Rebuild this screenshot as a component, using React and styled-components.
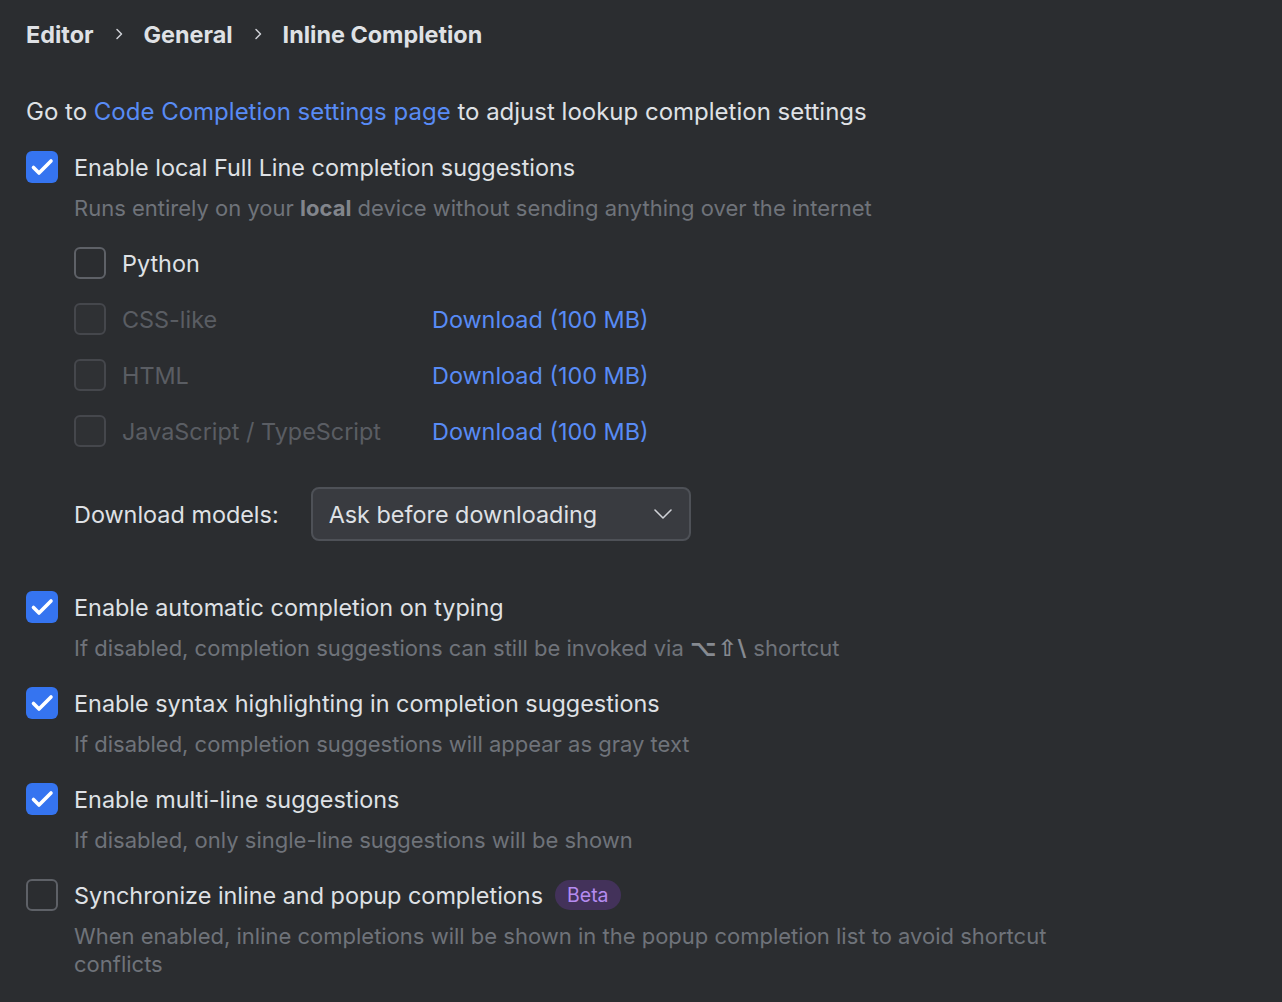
import React from 'react'
import styled, { createGlobalStyle } from 'styled-components'

const GlobalStyle = createGlobalStyle`
    html, body {
        margin: 0;
        padding: 0;
        background: #2b2d30;
    }
    body {
        font-family: Inter, "Noto Sans", "DejaVu Sans", sans-serif;
        color: #dfe1e5;
        -webkit-font-smoothing: antialiased;
    }
`

const Page = styled.div`
    min-height: 1002px;
    padding: 20px 26px 0 26px;
    box-sizing: border-box;
    display: flex;
    flex-direction: column;
`

const Crumbs = styled.nav`
    display: flex;
    align-items: center;
    gap: 19px;
    height: 28px;
    font-size: 23.4px;
    font-weight: 700;
    color: #dfe1e5;
`

const Intro = styled.p`
    margin: 50px 0 0 0;
    font-size: 24px;
    line-height: 28px;
`

const Link = styled.a`
    color: #588bf5;
    text-decoration: none;
    cursor: pointer;
`

const Options = styled.div`
    margin-top: 25px;
    display: flex;
    flex-direction: column;
    gap: 25px;
`

const Option = styled.div`
    display: flex;
    flex-direction: column;
    gap: 11px;
`

const CheckRow = styled.label`
    display: flex;
    align-items: center;
    gap: 16px;
    height: 32px;
    font-size: 23.4px;
    color: ${p => (p.$disabled ? '#5a5d63' : '#dfe1e5')};
`

const Box = styled.span`
    width: 32px;
    height: 32px;
    box-sizing: border-box;
    border-radius: 6px;
    flex-shrink: 0;
    display: flex;
    align-items: center;
    justify-content: center;
    background: ${p => (p.$checked ? '#3574f0' : p.$disabled ? '#2f3134' : 'transparent')};
    border: ${p => (p.$checked ? 'none' : p.$disabled ? '2px solid #45474c' : '2px solid #5e6167')};
`

const Title = styled.span`
    display: inline-flex;
    align-items: center;
    gap: 12px;
`

const Desc = styled.div`
    padding-left: 48px;
    max-width: 1010px;
    font-size: 22px;
    line-height: 28px;
    color: #6f737a;
    b {
        font-weight: 700;
        color: #82858c;
    }
`

const Keys = styled.span`
    font-family: "DejaVu Sans", sans-serif;
    font-weight: 700;
    font-size: 23px;
    color: #868a91;
    letter-spacing: 1px;
`

const Languages = styled.div`
    padding-left: 48px;
    margin-top: 14px;
    display: flex;
    flex-direction: column;
    gap: 24px;
`

const LangRow = styled.div`
    display: grid;
    grid-template-columns: 358px auto;
    align-items: center;
    font-size: 23.4px;
`

const ModelsRow = styled.div`
    padding-left: 48px;
    margin-top: 29px;
    margin-bottom: 25px;
    display: flex;
    align-items: center;
    gap: 32px;
    font-size: 23.4px;
`

const Select = styled.div`
    width: 380px;
    height: 54px;
    box-sizing: border-box;
    padding: 0 17px 0 16px;
    border: 2px solid #4e5157;
    border-radius: 8px;
    background: #393b40;
    display: flex;
    align-items: center;
    justify-content: space-between;
    font-size: 23.4px;
    color: #dfe1e5;
`

const Beta = styled.span`
    padding: 0 12px;
    height: 30px;
    border-radius: 15px;
    background: #43325a;
    color: #b58bf0;
    font-size: 19.5px;
    display: inline-flex;
    align-items: center;
`

const Chevron = ({ size = 12, color = '#cfd1d6' }) => (
    <svg width={size} height={size} viewBox="0 0 12 12" fill="none">
        <path d="M4 1.5l4.5 4.5L4 10.5" stroke={color} strokeWidth="1.5" strokeLinecap="round" strokeLinejoin="round" />
    </svg>
)

const Down = () => (
    <svg width="18" height="18" viewBox="0 0 18 18" fill="none">
        <path d="M1 5l8 8 8-8" stroke="#cfd1d6" strokeWidth="1.6" strokeLinecap="round" strokeLinejoin="round" />
    </svg>
)

const Check = () => (
    <svg width="32" height="32" viewBox="0 0 32 32" fill="none">
        <path d="M7.5 16.5l5.5 5.5L25 10" stroke="#fff" strokeWidth="3.6" strokeLinecap="round" strokeLinejoin="round" />
    </svg>
)

const Checkbox = ({ checked, disabled, children }) => (
    <CheckRow $disabled={disabled}>
        <Box $checked={checked} $disabled={disabled}>{checked && <Check />}</Box>
        {children}
    </CheckRow>
)

const langs = ['CSS-like', 'HTML', 'JavaScript / TypeScript']

const App = () => {
    return (
        <Page>
            <GlobalStyle />
            <Crumbs>
                <span>Editor</span>
                <Chevron />
                <span>General</span>
                <Chevron />
                <span>Inline Completion</span>
            </Crumbs>

            <Intro>
                Go to <Link>Code Completion settings page</Link> to adjust lookup completion settings
            </Intro>

            <Options>
                <Option>
                    <Checkbox checked>Enable local Full Line completion suggestions</Checkbox>
                    <Desc>Runs entirely on your <b>local</b> device without sending anything over the internet</Desc>
                    <Languages>
                        <Checkbox>Python</Checkbox>
                        {langs.map(l => (
                            <LangRow key={l}>
                                <Checkbox disabled>{l}</Checkbox>
                                <Link>Download (100 MB)</Link>
                            </LangRow>
                        ))}
                    </Languages>
                    <ModelsRow>
                        <span>Download models:</span>
                        <Select>
                            <span>Ask before downloading</span>
                            <Down />
                        </Select>
                    </ModelsRow>
                </Option>

                <Option>
                    <Checkbox checked>Enable automatic completion on typing</Checkbox>
                    <Desc>If disabled, completion suggestions can still be invoked via <Keys>⌥⇧\</Keys> shortcut</Desc>
                </Option>

                <Option>
                    <Checkbox checked>Enable syntax highlighting in completion suggestions</Checkbox>
                    <Desc>If disabled, completion suggestions will appear as gray text</Desc>
                </Option>

                <Option>
                    <Checkbox checked>Enable multi-line suggestions</Checkbox>
                    <Desc>If disabled, only single-line suggestions will be shown</Desc>
                </Option>

                <Option>
                    <Checkbox>
                        <Title>
                            Synchronize inline and popup completions
                            <Beta>Beta</Beta>
                        </Title>
                    </Checkbox>
                    <Desc>When enabled, inline completions will be shown in the popup completion list to avoid shortcut conflicts</Desc>
                </Option>
            </Options>
        </Page>
    )
}

export default App
